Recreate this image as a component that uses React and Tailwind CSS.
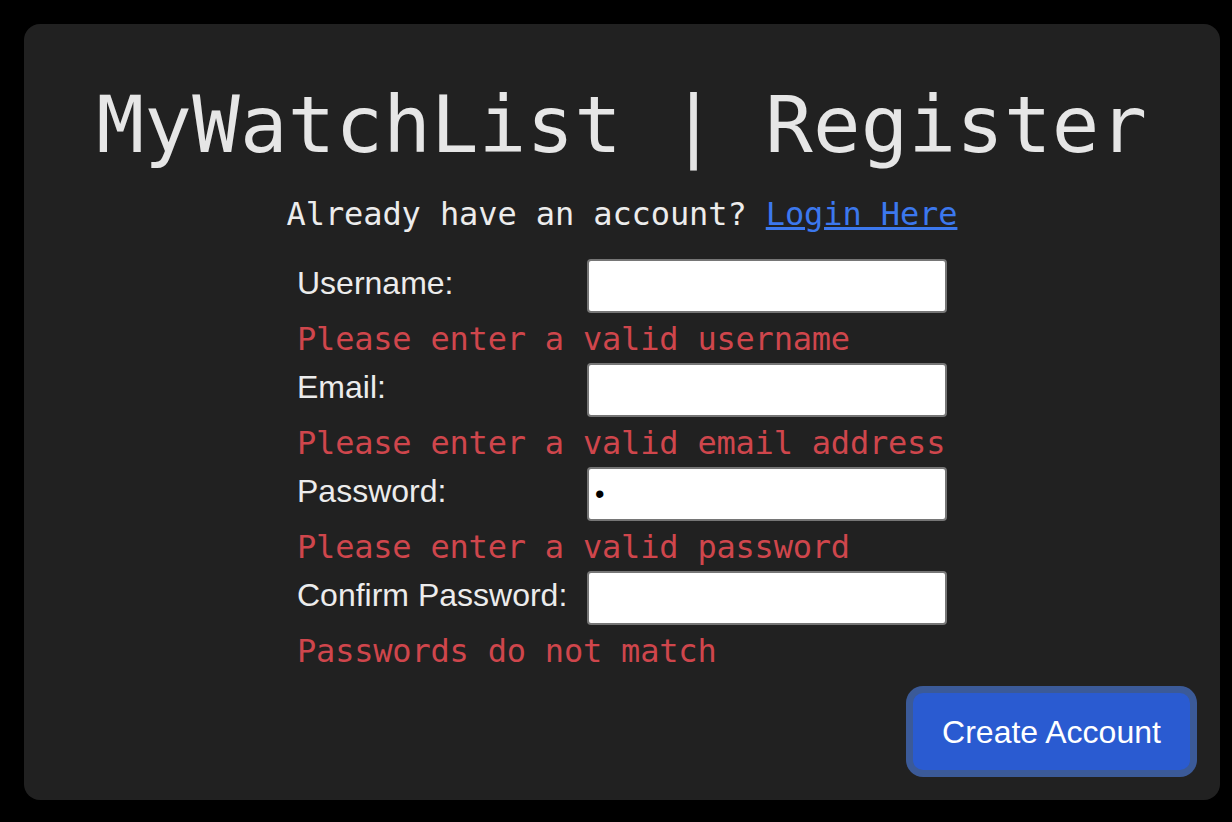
import React from "react";

const mono = { fontFamily: '"DejaVu Sans Mono", "Liberation Mono", monospace' };

const fields = [
  { label: "Username:", type: "text", error: "Please enter a valid username" },
  { label: "Email:", type: "email", error: "Please enter a valid email address" },
  { label: "Password:", type: "password", error: "Please enter a valid password", value: "a" },
  { label: "Confirm Password:", type: "password", error: "Passwords do not match" },
];

function App() {
  return (
    <div className="min-h-screen bg-black pt-6 pl-6">
      <div className="w-[1196px] h-[776px] rounded-2xl bg-[#212121] flex flex-col items-center pt-[62px]">
        <h1
          className="text-[79px] leading-none text-[#e6e6e6] font-normal tracking-[0.2px] whitespace-nowrap"
          style={mono}
        >
          MyWatchList | Register
        </h1>
        <p className="mt-[33px] text-[32px] leading-8 text-[#ececec] tracking-[-0.1px] whitespace-nowrap" style={mono}>
          Already have an account?{" "}
          <a href="#" className="text-[#3c78ee] underline">
            Login Here
          </a>
        </p>

        <div
          className="mt-[29px] grid grid-cols-[290px_360px]"
          style={{ fontFamily: '"Liberation Sans", Arial, sans-serif' }}
        >
          {fields.map((f) => (
            <React.Fragment key={f.label}>
              <label className="flex items-center h-[54px] pb-[6px] text-[32px] leading-8 text-[#ececec] whitespace-nowrap">
                {f.label}
              </label>
              <input
                type={f.type}
                defaultValue={f.value}
                className="h-[54px] w-[360px] bg-white border-2 border-[#767676] rounded-[4px] px-[6px] text-[27px] text-black outline-none"
              />
              <div
                className="col-span-2 pt-[10px] pb-[8px] text-[32px] leading-8 text-[#cf464c] tracking-[-0.2px] whitespace-nowrap"
                style={mono}
              >
                {f.error}
              </div>
            </React.Fragment>
          ))}
        </div>

        <button
          className="self-end mr-[30px] mt-[18px] h-[77px] w-[277px] rounded-[10px] bg-[#2a5bd1] ring-[7px] ring-[#3b5a98] text-white text-[32px] leading-8"
          style={{ fontFamily: '"Liberation Sans", Arial, sans-serif' }}
        >
          Create Account
        </button>
      </div>
    </div>
  );
}

export default App;
